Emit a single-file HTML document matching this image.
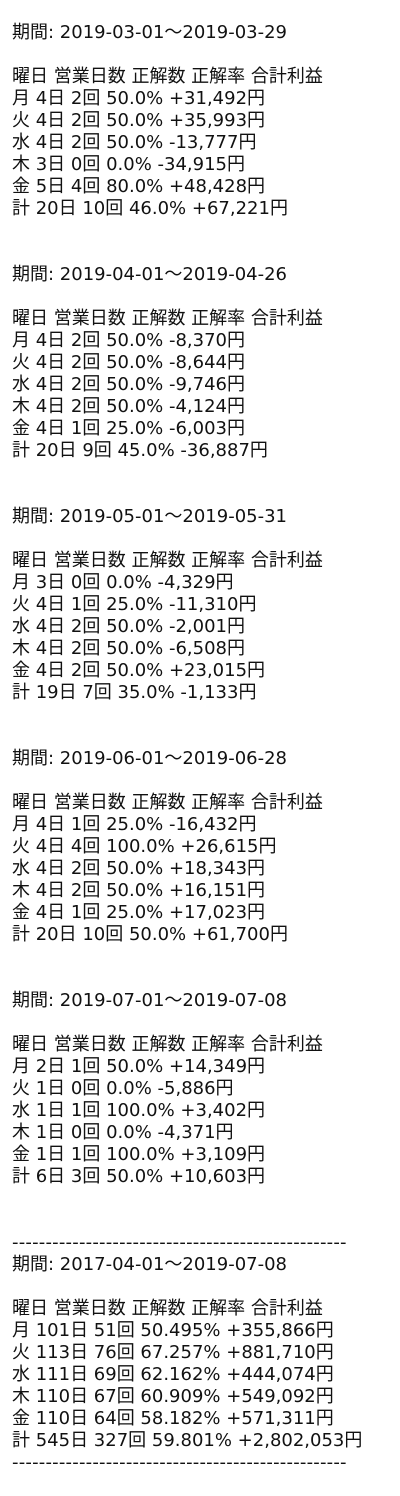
<!DOCTYPE html>
<html><head><meta charset="utf-8"><style>
html,body{margin:0;padding:0;background:#fff;}
body{width:400px;height:1496px;overflow:hidden;}
.t{position:absolute;left:12px;top:22px;font-family:"DejaVu Sans","Noto Sans CJK JP",sans-serif;font-size:18px;line-height:22px;color:#111;white-space:pre;}
.d{display:inline-block;width:334px;overflow:hidden;vertical-align:top;letter-spacing:0.2px;}
</style></head><body><div class="t">期間: 2019-03-01～2019-03-29

曜日 営業日数 正解数 正解率 合計利益
月 4日 2回 50.0% +31,492円
火 4日 2回 50.0% +35,993円
水 4日 2回 50.0% -13,777円
木 3日 0回 0.0% -34,915円
金 5日 4回 80.0% +48,428円
計 20日 10回 46.0% +67,221円


期間: 2019-04-01～2019-04-26

曜日 営業日数 正解数 正解率 合計利益
月 4日 2回 50.0% -8,370円
火 4日 2回 50.0% -8,644円
水 4日 2回 50.0% -9,746円
木 4日 2回 50.0% -4,124円
金 4日 1回 25.0% -6,003円
計 20日 9回 45.0% -36,887円


期間: 2019-05-01～2019-05-31

曜日 営業日数 正解数 正解率 合計利益
月 3日 0回 0.0% -4,329円
火 4日 1回 25.0% -11,310円
水 4日 2回 50.0% -2,001円
木 4日 2回 50.0% -6,508円
金 4日 2回 50.0% +23,015円
計 19日 7回 35.0% -1,133円


期間: 2019-06-01～2019-06-28

曜日 営業日数 正解数 正解率 合計利益
月 4日 1回 25.0% -16,432円
火 4日 4回 100.0% +26,615円
水 4日 2回 50.0% +18,343円
木 4日 2回 50.0% +16,151円
金 4日 1回 25.0% +17,023円
計 20日 10回 50.0% +61,700円


期間: 2019-07-01～2019-07-08

曜日 営業日数 正解数 正解率 合計利益
月 2日 1回 50.0% +14,349円
火 1日 0回 0.0% -5,886円
水 1日 1回 100.0% +3,402円
木 1日 0回 0.0% -4,371円
金 1日 1回 100.0% +3,109円
計 6日 3回 50.0% +10,603円


<span class="d">------------------------------------------------------------------</span>
期間: 2017-04-01～2019-07-08

曜日 営業日数 正解数 正解率 合計利益
月 101日 51回 50.495% +355,866円
火 113日 76回 67.257% +881,710円
水 111日 69回 62.162% +444,074円
木 110日 67回 60.909% +549,092円
金 110日 64回 58.182% +571,311円
計 545日 327回 59.801% +2,802,053円
<span class="d">------------------------------------------------------------------</span></div></body></html>
